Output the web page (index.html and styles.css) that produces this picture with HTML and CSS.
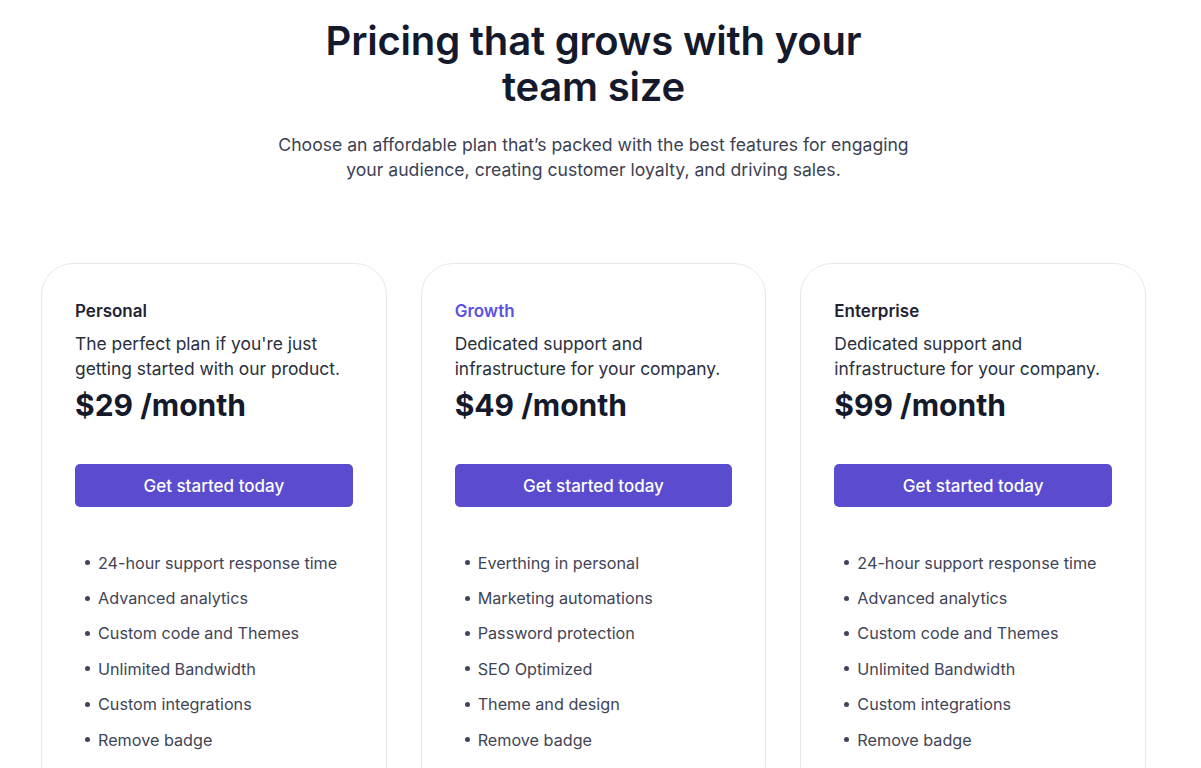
FILE: index.html
```html
<!DOCTYPE html>
<html lang="en">
<head>
<meta charset="utf-8">
<title>Pricing</title>
<link rel="stylesheet" href="styles.css">
</head>
<body>
<main class="page">
  <header class="intro">
    <h1 class="title">Pricing that grows with your<br>team size</h1>
    <p class="lead">Choose an affordable plan that’s packed with the best features for engaging your audience, creating customer loyalty, and driving sales.</p>
  </header>
  <section class="plans">
    <article class="plan">
      <h2 class="plan-name">Personal</h2>
      <p class="plan-desc">The perfect plan if you're just getting started with our product.</p>
      <p class="plan-price">$29 /month</p>
      <a class="plan-btn" href="#">Get started today</a>
      <ul class="features">
        <li>24-hour support response time</li>
        <li>Advanced analytics</li>
        <li>Custom code and Themes</li>
        <li>Unlimited Bandwidth</li>
        <li>Custom integrations</li>
        <li>Remove badge</li>
      </ul>
    </article>
    <article class="plan">
      <h2 class="plan-name plan-name--accent">Growth</h2>
      <p class="plan-desc">Dedicated support and infrastructure for your company.</p>
      <p class="plan-price">$49 /month</p>
      <a class="plan-btn" href="#">Get started today</a>
      <ul class="features">
        <li>Everthing in personal</li>
        <li>Marketing automations</li>
        <li>Password protection</li>
        <li>SEO Optimized</li>
        <li>Theme and design</li>
        <li>Remove badge</li>
      </ul>
    </article>
    <article class="plan">
      <h2 class="plan-name">Enterprise</h2>
      <p class="plan-desc">Dedicated support and infrastructure for your company.</p>
      <p class="plan-price">$99 /month</p>
      <a class="plan-btn" href="#">Get started today</a>
      <ul class="features">
        <li>24-hour support response time</li>
        <li>Advanced analytics</li>
        <li>Custom code and Themes</li>
        <li>Unlimited Bandwidth</li>
        <li>Custom integrations</li>
        <li>Remove badge</li>
      </ul>
    </article>
  </section>
</main>
</body>
</html>
```

FILE: styles.css
```css
* { box-sizing: border-box; }
html, body { margin: 0; padding: 0; background: #ffffff; }
body {
  font-family: "Inter", "Noto Sans", sans-serif;
  color: #111827;
  overflow: hidden;
}
.page {
  width: 1105px;
  margin-left: 41px;
}
.intro {
  text-align: center;
  padding-top: 18px;
}
.title {
  margin: 0;
  font-size: 40px;
  line-height: 46px;
  font-weight: 600;
  color: #141a2c;
  letter-spacing: -0.2px;
}
.lead {
  margin: 22px auto 0;
  width: 650px;
  font-size: 17.6px;
  line-height: 25px;
  color: #3b4152;
}
.plans {
  margin-top: 81px;
  display: grid;
  grid-template-columns: repeat(3, 1fr);
  gap: 34px;
}
.plan {
  border: 1px solid #e7e8ec;
  border-radius: 32px;
  padding: 35px 33px 40px;
  min-height: 520px;
}
.plan-name {
  margin: 0;
  font-size: 17px;
  line-height: 24px;
  font-weight: 600;
  color: #1f2433;
}
.plan-name--accent { color: #5b52e3; }
.plan-desc {
  margin: 8px 0 0;
  font-size: 17.4px;
  line-height: 25px;
  color: #2a2f3e;
}
.plan-price {
  margin: 4px 0 0;
  font-size: 30px;
  line-height: 40px;
  font-weight: 700;
  color: #141a2c;
}
.plan-btn {
  display: flex;
  align-items: center;
  justify-content: center;
  margin-top: 39px;
  height: 43px;
  border-radius: 5px;
  background: #5a4bcf;
  color: #ffffff;
  font-size: 17px;
  font-weight: 500;
  text-decoration: none;
}
.features {
  list-style: none;
  margin: 38px 0 0;
  padding: 0 0 0 10px;
}
.features li {
  display: flex;
  align-items: center;
  gap: 8px;
  height: 35.4px;
  font-size: 16.2px;
  color: #3f4556;
}
.features li::before {
  content: "";
  width: 5px;
  height: 5px;
  border-radius: 50%;
  background: #3f4556;
  flex: none;
}
```
